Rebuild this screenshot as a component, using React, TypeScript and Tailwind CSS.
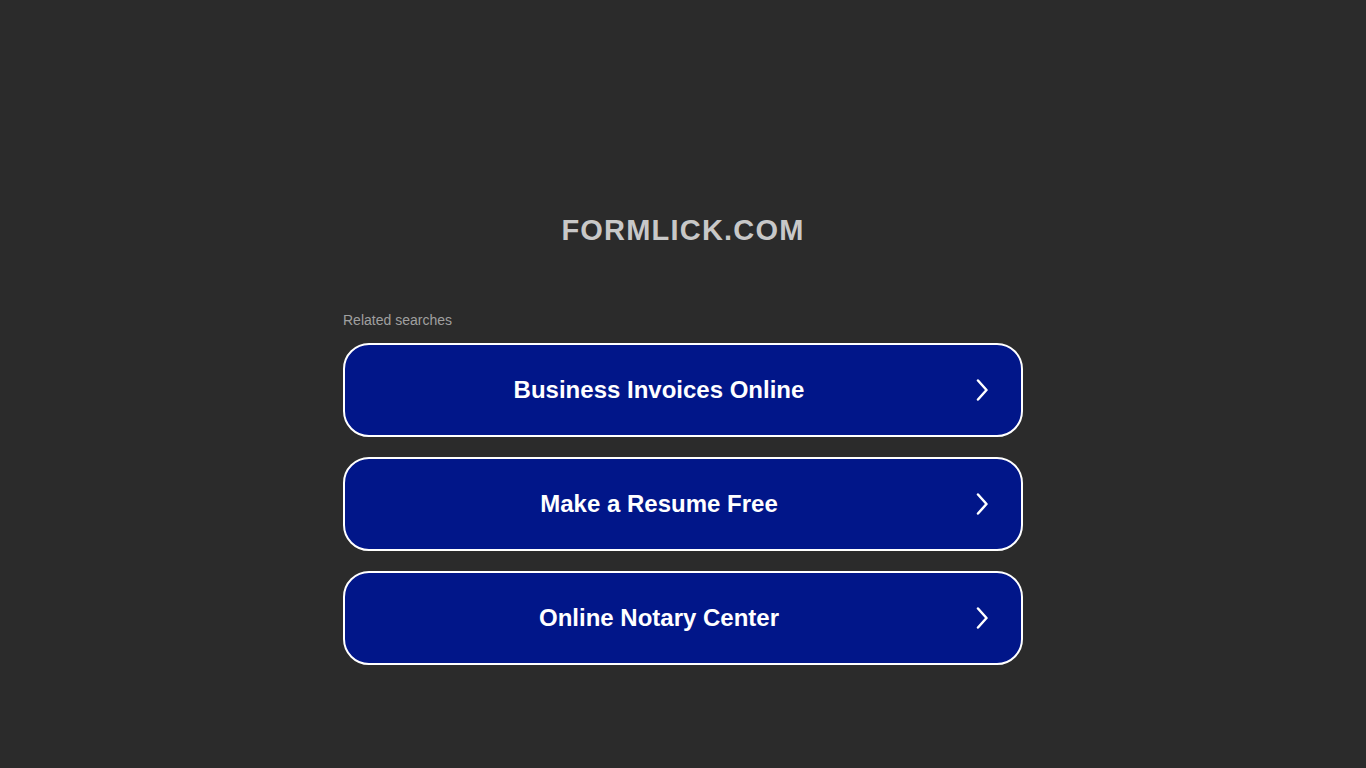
const busquedas = ['Business Invoices Online', 'Make a Resume Free', 'Online Notary Center'];

function Flecha() {
  return (
    <svg width="12" height="22" viewBox="0 0 12 22" fill="none">
      <path
        d="M2 1.5 L10.5 11 L2 20.5"
        stroke="white"
        strokeWidth="2.5"
        strokeLinecap="round"
        strokeLinejoin="round"
      />
    </svg>
  );
}

export default function App() {
  return (
    <div
      className="min-h-screen bg-[#2b2b2b] flex flex-col items-center"
      style={{ fontFamily: '"Liberation Sans", Arial, sans-serif' }}
    >
      {/* Dominio */}
      <h1 className="mt-[212px] text-[29px] leading-[36px] font-bold tracking-[1.2px] text-[#c8c8c8]">
        FORMLICK.COM
      </h1>

      {/* Búsquedas relacionadas */}
      <div className="w-[680px] mt-[64px]">
        <p className="text-[14px] leading-[16px] text-[#a0a0a0] mb-[15px]">Related searches</p>
        <div className="flex flex-col gap-[20px]">
          {busquedas.map((b) => (
            <a
              key={b}
              href="#"
              className="flex items-center h-[94px] rounded-[26px] border-2 border-white bg-[#011689] text-white"
            >
              <span className="flex-1 text-center text-[24px] font-bold">{b}</span>
              <span className="w-[48px] flex items-center pl-[3px]">
                <Flecha />
              </span>
            </a>
          ))}
        </div>
      </div>
    </div>
  );
}
